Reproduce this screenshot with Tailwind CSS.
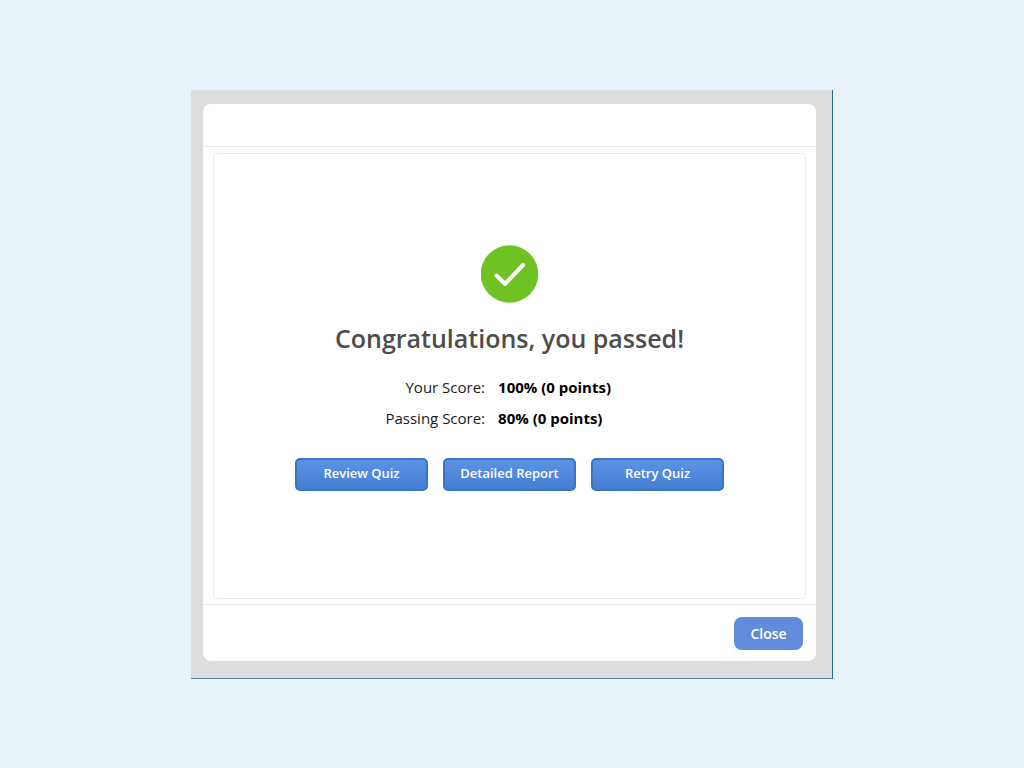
<!DOCTYPE html>
<html lang="en">
<head>
<meta charset="utf-8">
<meta name="viewport" content="width=device-width, initial-scale=1">
<title>Quiz result</title>
<script src="https://cdn.jsdelivr.net/npm/@tailwindcss/browser@4"></script>
</head>
<body class="bg-[#e7f3f8] font-['Open_Sans',sans-serif] text-black">
<main class="flex min-h-screen items-center justify-center">
  <div class="w-full max-w-[642px] border-r border-b border-r-[#2f6690] border-b-[#4f80a6] bg-[#dcdddf] pt-[14px] pr-[16px] pb-[17px] pl-[12px]">
    <section role="dialog" aria-labelledby="result-title" class="rounded-lg bg-white">
      <header class="h-[43px] border-b border-[#ececee]"></header>
      <div class="px-[10px] pt-[6px] pb-[5px]">
        <div class="flex flex-col items-center rounded border border-[#ececee] px-4 pt-[91px] pb-[107px]">
          <svg class="size-[58px]" viewBox="0 0 58 58" aria-hidden="true">
            <circle cx="28.500" cy="29" r="28.800" fill="#6ec323"/>
            <path d="M15.500 30.500 24 39 42 20" fill="none" stroke="#fff" stroke-width="4" stroke-linecap="round" stroke-linejoin="round"/>
          </svg>
          <h1 id="result-title" class="mt-[18px] text-[25px] leading-[34px] font-semibold text-[#4d4d4d]">Congratulations, you passed!</h1>
          <dl class="mt-[17px] grid w-full grid-cols-[256fr_292fr] gap-x-[13px] text-[15px] leading-[31px]">
            <dt class="text-right text-[#1a1a1a]">Your Score:</dt>
            <dd class="font-bold">100% (0 points)</dd>
            <dt class="text-right text-[#1a1a1a]">Passing Score:</dt>
            <dd class="font-bold">80% (0 points)</dd>
          </dl>
          <div class="mt-[24px] flex flex-wrap justify-center gap-[15px]">
            <button type="button" class="h-[33px] w-[133px] rounded-[5px] border-2 border-[#3c74c6] bg-linear-to-b from-[#5b92e5] to-[#457fd2] text-[13px] font-semibold text-white">Review Quiz</button>
            <button type="button" class="h-[33px] w-[133px] rounded-[5px] border-2 border-[#3c74c6] bg-linear-to-b from-[#5b92e5] to-[#457fd2] text-[13px] font-semibold text-white">Detailed Report</button>
            <button type="button" class="h-[33px] w-[133px] rounded-[5px] border-2 border-[#3c74c6] bg-linear-to-b from-[#5b92e5] to-[#457fd2] text-[13px] font-semibold text-white">Retry Quiz</button>
          </div>
        </div>
      </div>
      <footer class="flex justify-end border-t border-[#ececee] pt-[12px] pr-[13px] pb-[11px]">
        <button type="button" class="h-[33px] w-[69px] rounded-lg bg-[#628cdb] text-[14px] font-semibold text-white">Close</button>
      </footer>
    </section>
  </div>
</main>
</body>
</html>
